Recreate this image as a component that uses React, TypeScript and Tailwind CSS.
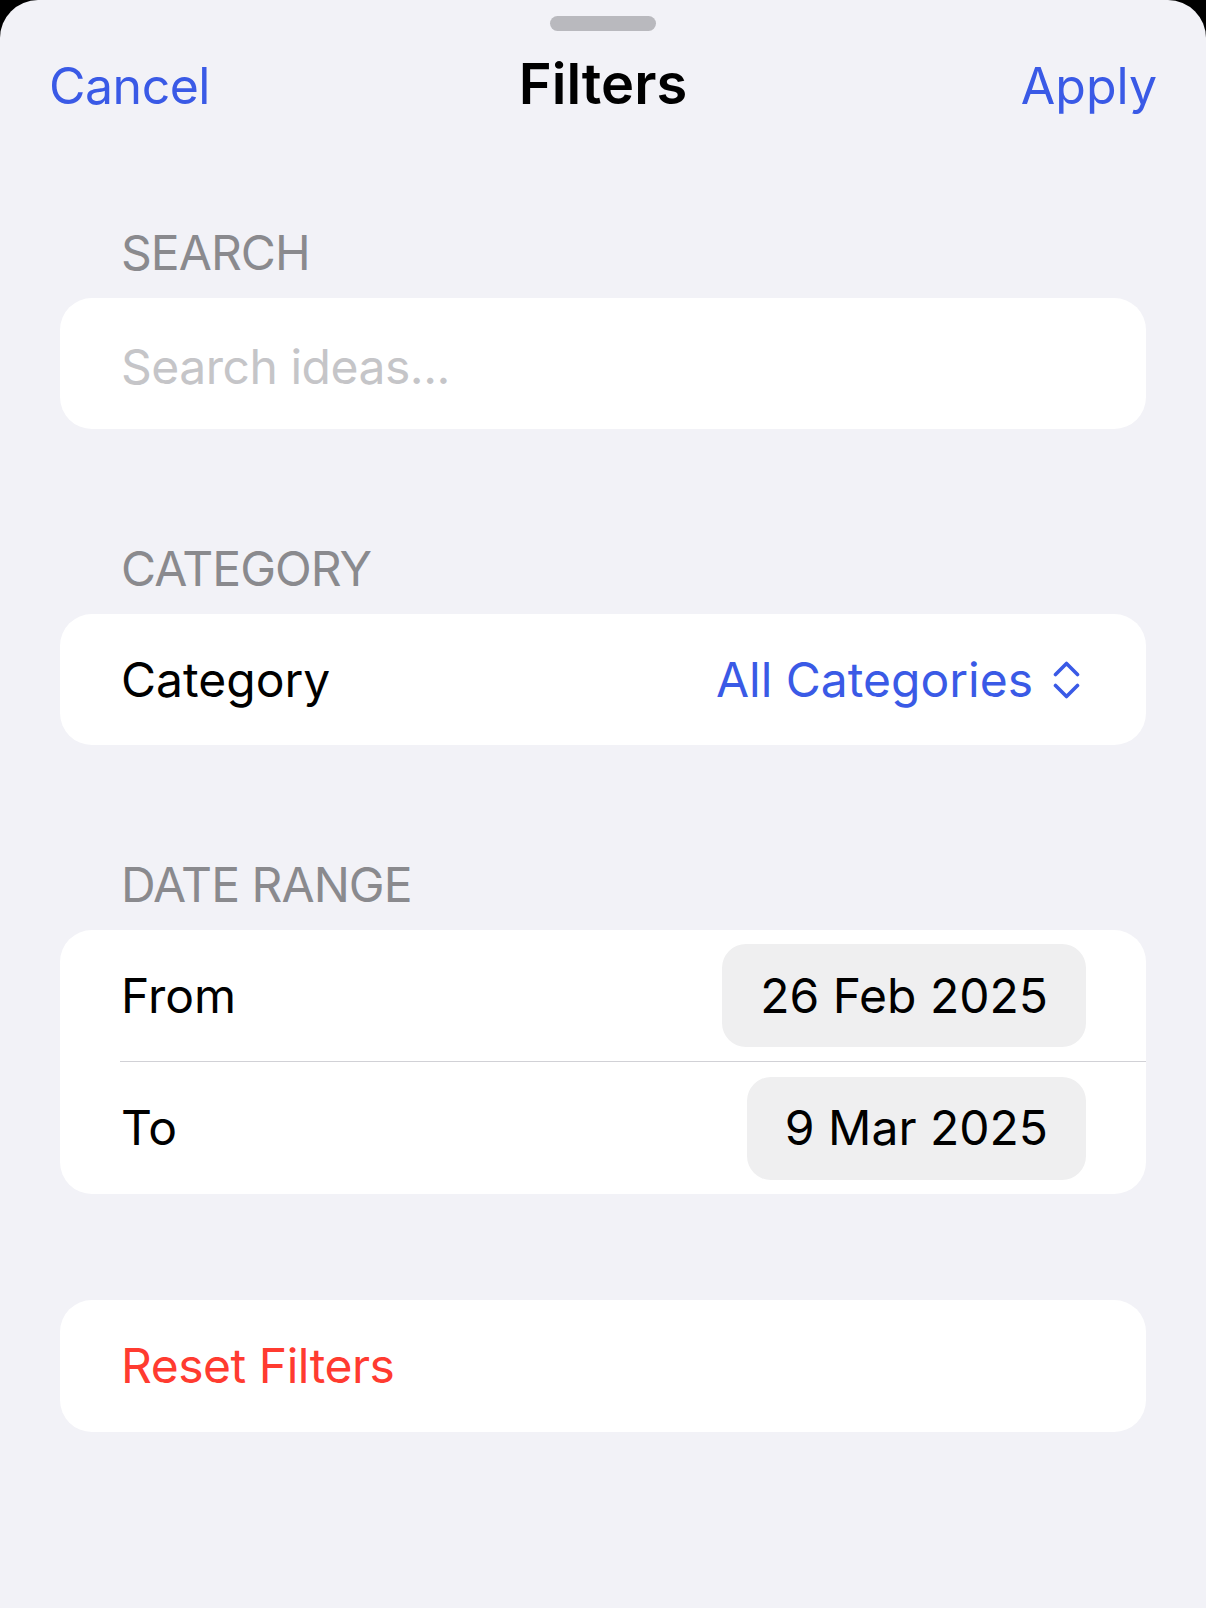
import React, { useState } from "react";

const font = { fontFamily: "Inter, 'Noto Sans', sans-serif" };

const UpDown = () => (
  <svg width="27" height="38" viewBox="0 0 27 38" fill="none">
    <path
      d="M2.5 13.5L13.5 2.5L24.5 13.5"
      stroke="#3a5ae6"
      strokeWidth="3.6"
      strokeLinecap="round"
      strokeLinejoin="round"
    />
    <path
      d="M2.5 24.5L13.5 35.5L24.5 24.5"
      stroke="#3a5ae6"
      strokeWidth="3.6"
      strokeLinecap="round"
      strokeLinejoin="round"
    />
  </svg>
);

const SectionLabel = ({ children }: { children: React.ReactNode }) => (
  <div className="pl-[61px] mb-[21px] text-[48px] leading-none tracking-[-0.02em] text-[#8a8a8e] uppercase">
    {children}
  </div>
);

const App = () => {
  const [search, setSearch] = useState("");

  return (
    <div className="min-h-screen bg-black" style={font}>
      <div className="min-h-screen bg-[#f2f2f7] rounded-t-[38px] flex flex-col">
        <div className="mt-[16px] mx-auto h-[15px] w-[106px] rounded-full bg-[#b9b9be]"></div>

        <div className="mt-[25px] px-[49px] grid grid-cols-3 items-baseline">
          <button className="text-left text-[50px] leading-none tracking-[-0.01em] text-[#3a5ae6]">
            Cancel
          </button>
          <div className="text-center text-[56px] leading-none font-semibold text-black">
            Filters
          </div>
          <button className="text-right text-[50px] leading-none text-[#3a5ae6]">
            Apply
          </button>
        </div>

        <div className="px-[60px] mt-[117px] flex flex-col">
          <SectionLabel>Search</SectionLabel>
          <div className="h-[131px] rounded-[32px] bg-white flex items-center pl-[61px] pr-[60px] pt-[5px]">
            <input
              value={search}
              onChange={(e) => setSearch(e.target.value)}
              placeholder="Search ideas..."
              className="w-full bg-transparent outline-none text-[48px] leading-none tracking-[-0.01em] text-black placeholder:text-[#c5c5c8]"
            />
          </div>

          <div className="mt-[116px]">
            <SectionLabel>Category</SectionLabel>
            <div className="h-[131px] rounded-[32px] bg-white flex items-center justify-between pl-[61px] pr-[66px]">
              <span className="text-[48px] leading-none text-black">Category</span>
              <div className="flex items-center gap-[20px]">
                <span className="text-[48px] leading-none text-[#3a5ae6]">
                  All Categories
                </span>
                <UpDown />
              </div>
            </div>
          </div>

          <div className="mt-[116px]">
            <SectionLabel>Date Range</SectionLabel>
            <div className="rounded-[32px] bg-white flex flex-col">
              <div className="h-[131px] flex items-center justify-between pl-[61px] pr-[60px]">
                <span className="text-[48px] leading-none text-black">From</span>
                <div className="h-[103px] px-[38px] rounded-[24px] bg-[#efeff0] flex items-center text-[48px] leading-none text-black">
                  26 Feb 2025
                </div>
              </div>
              <div className="ml-[60px] h-px bg-[#d1d1d6]"></div>
              <div className="h-[132px] flex items-center justify-between pl-[61px] pr-[60px]">
                <span className="text-[48px] leading-none text-black">To</span>
                <div className="h-[103px] px-[38px] rounded-[24px] bg-[#efeff0] flex items-center text-[48px] leading-none text-black">
                  9 Mar 2025
                </div>
              </div>
            </div>
          </div>

          <button className="mt-[106px] h-[132px] rounded-[32px] bg-white flex items-center px-[61px] text-[48px] leading-none tracking-[-0.01em] text-[#ff3b30]">
            Reset Filters
          </button>
        </div>
      </div>
    </div>
  );
};

export default App;
